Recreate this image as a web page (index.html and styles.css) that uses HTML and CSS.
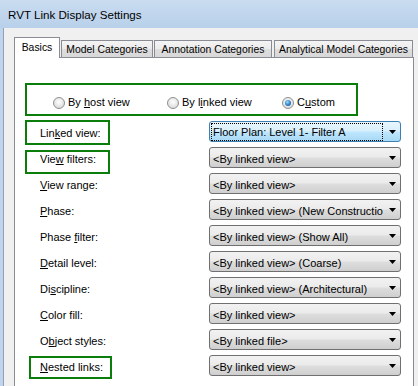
FILE: index.html
```html
<!DOCTYPE html>
<html>
<head>
<meta charset="utf-8">
<title>RVT Link Display Settings</title>
<link rel="stylesheet" href="styles.css">
</head>
<body>
<div class="window">
  <div class="titlebar">RVT Link Display Settings</div>
  <div class="frame">
    <div class="client">
      <div class="tabctl">
        <div class="tabs">
          <div class="tab tab-active">Basics</div>
          <div class="tab tab-model">Model Categories</div>
          <div class="tab tab-annot">Annotation Categories</div>
          <div class="tab tab-anal">Analytical Model Categories</div>
        </div>
        <div class="panel">
          <div class="radio-group">
            <div class="radio-item ri-1"><span class="radio"></span><span>By <u>h</u>ost view</span></div>
            <div class="radio-item ri-2"><span class="radio"></span><span>By l<u>i</u>nked view</span></div>
            <div class="radio-item"><span class="radio radio-checked"><span class="dot"></span></span><span>C<u>u</u>stom</span></div>
          </div>
          <div class="rows">
            <div class="label hl hl-linked">Lin<u>k</u>ed view:</div>
            <div class="combo combo-focus"><span class="combo-text">Floor Plan: Level 1- Filter A</span><svg class="combo-arrow" viewBox="0 0 7 4"><path d="M0 0H7L3.5 4Z" fill="#000"/></svg></div>

            <div class="label hl hl-filters">Vie<u>w</u> filters:</div>
            <div class="combo"><span class="combo-text">&lt;By linked view&gt;</span><svg class="combo-arrow" viewBox="0 0 7 4"><path d="M0 0H7L3.5 4Z" fill="#000"/></svg></div>

            <div class="label"><u>V</u>iew range:</div>
            <div class="combo"><span class="combo-text">&lt;By linked view&gt;</span><svg class="combo-arrow" viewBox="0 0 7 4"><path d="M0 0H7L3.5 4Z" fill="#000"/></svg></div>

            <div class="label"><u>P</u>hase:</div>
            <div class="combo"><span class="combo-text">&lt;By linked view&gt; (New Constructio</span><svg class="combo-arrow" viewBox="0 0 7 4"><path d="M0 0H7L3.5 4Z" fill="#000"/></svg></div>

            <div class="label">Phase <u>f</u>ilter:</div>
            <div class="combo"><span class="combo-text">&lt;By linked view&gt; (Show All)</span><svg class="combo-arrow" viewBox="0 0 7 4"><path d="M0 0H7L3.5 4Z" fill="#000"/></svg></div>

            <div class="label"><u>D</u>etail level:</div>
            <div class="combo"><span class="combo-text">&lt;By linked view&gt; (Coarse)</span><svg class="combo-arrow" viewBox="0 0 7 4"><path d="M0 0H7L3.5 4Z" fill="#000"/></svg></div>

            <div class="label">Di<u>s</u>cipline:</div>
            <div class="combo"><span class="combo-text">&lt;By linked view&gt; (Architectural)</span><svg class="combo-arrow" viewBox="0 0 7 4"><path d="M0 0H7L3.5 4Z" fill="#000"/></svg></div>

            <div class="label"><u>C</u>olor fill:</div>
            <div class="combo"><span class="combo-text">&lt;By linked view&gt;</span><svg class="combo-arrow" viewBox="0 0 7 4"><path d="M0 0H7L3.5 4Z" fill="#000"/></svg></div>

            <div class="label">O<u>b</u>ject styles:</div>
            <div class="combo"><span class="combo-text">&lt;By linked file&gt;</span><svg class="combo-arrow" viewBox="0 0 7 4"><path d="M0 0H7L3.5 4Z" fill="#000"/></svg></div>

            <div class="label hl hl-nested"><u>N</u>ested links:</div>
            <div class="combo"><span class="combo-text">&lt;By linked view&gt;</span><svg class="combo-arrow" viewBox="0 0 7 4"><path d="M0 0H7L3.5 4Z" fill="#000"/></svg></div>
          </div>
        </div>
      </div>
    </div>
  </div>
</div>
</body>
</html>
```

FILE: styles.css
```css
html, body {
  margin: 0;
  padding: 0;
}
body {
  background: #f0f0f0;
  font-family: "Liberation Sans", Arial, sans-serif;
  font-size: 11px;
  color: #000;
  overflow: hidden;
}
.window {
  width: 418px;
  height: 386px;
  overflow: hidden;
  display: flex;
  flex-direction: column;
}
.titlebar {
  flex: none;
  height: 28px;
  box-sizing: border-box;
  padding: 1px 0 0 8px;
  line-height: 27px;
  font-size: 11.6px;
  white-space: nowrap;
  background: linear-gradient(#c9dcf0, #b8d0ea);
}
.frame {
  flex: 1;
  display: flex;
  border-left: 3px solid #c0d5ec;
}
.client {
  flex: 1;
  border-left: 1px solid #8fa2b9;
  background: #f0f0f0;
  padding: 9px 0 0 10px;
}
.tabctl {
  width: 400px;
}
.tabs {
  display: flex;
  align-items: flex-end;
  height: 20px;
}
.tab {
  box-sizing: border-box;
  height: 17px;
  border: 1px solid #898c95;
  border-bottom: none;
  background: linear-gradient(#f4f4f4, #ebebeb 50%, #dedede 50%, #d8d8d8);
  text-align: center;
  padding-top: 2px;
  line-height: 14px;
  font-size: 10.4px;
  white-space: nowrap;
  overflow: hidden;
}
.tab-active {
  height: 21px;
  width: 46px;
  margin-bottom: -1px;
  background: #fff;
  padding-top: 3px;
  position: relative;
  z-index: 1;
}
.tab-model {
  width: 92px;
  margin-left: 1px;
}
.tab-annot {
  width: 118px;
  margin-left: 1px;
}
.tab-anal {
  width: 139px;
  margin-left: 2px;
}
.panel {
  box-sizing: border-box;
  height: 340px;
  border: 1px solid #898c95;
  background: #fff;
  padding: 25px 0 0 10px;
}
.radio-group {
  box-sizing: border-box;
  width: 333px;
  height: 33px;
  border: 2px solid #0b7d0b;
  padding: 11px 0 0 26px;
  display: flex;
}
.radio-item {
  display: flex;
  align-items: center;
  height: 13px;
  line-height: 13px;
  white-space: nowrap;
}
.ri-1 {
  width: 114px;
}
.ri-2 {
  width: 115px;
}
.radio {
  flex: none;
  box-sizing: border-box;
  width: 12px;
  height: 12px;
  border-radius: 50%;
  border: 1px solid #8f9091;
  background: radial-gradient(circle at 50% 40%, #ffffff 0%, #e6e6e6 55%, #cfcfcf 100%);
  margin-right: 3px;
  display: flex;
  align-items: center;
  justify-content: center;
}
.dot {
  width: 6px;
  height: 6px;
  border-radius: 50%;
  background: radial-gradient(circle at 40% 35%, #9adcff 0%, #2a7fc6 55%, #0d4a88 100%);
}
.rows {
  display: grid;
  grid-template-columns: 184px 192px;
  row-gap: 5px;
  margin-top: 5px;
}
.label {
  box-sizing: border-box;
  height: 21px;
  padding: 4px 0 0 15px;
  line-height: 16px;
  white-space: nowrap;
  align-self: start;
}
.hl {
  border: 2px solid #0b7d0b;
}
.hl-linked {
  width: 85px;
  height: 25px;
  margin: -1px 0 -3px 0;
  padding: 1px 0 0 13px;
  line-height: 20px;
}
.hl-filters {
  width: 85px;
  height: 24px;
  margin: 3px 0 -6px 0;
  padding: 0 0 0 13px;
  line-height: 15px;
}
.hl-nested {
  width: 83px;
  height: 23px;
  margin: 1px 0 -3px 4px;
  padding: 0 0 0 9px;
  line-height: 19px;
}
.combo {
  box-sizing: border-box;
  height: 21px;
  border: 1px solid #707070;
  border-radius: 3px;
  background: linear-gradient(#f2f2f2, #ebebeb 45%, #dddddd 55%, #cfcfcf);
  display: flex;
  align-items: flex-start;
  padding: 0 4px 0 1px;
  align-self: start;
}
.combo-text {
  flex: 1;
  min-width: 0;
  overflow: hidden;
  white-space: nowrap;
  padding: 4px 0 0 2px;
  line-height: 15px;
}
.combo-arrow {
  flex: none;
  width: 7px;
  height: 4px;
  margin: 8px 0 0 6px;
}
.combo-focus {
  border-color: #3c7fb1;
  background: linear-gradient(#eaf6fd, #d9f0fc 45%, #bee6fd 55%, #a7d9f5);
}
.combo-focus .combo-text {
  box-sizing: border-box;
  height: 18px;
  border: 1px dotted #000;
  margin: 1px 0;
  padding: 0 0 0 1px;
  line-height: 16px;
}
```
